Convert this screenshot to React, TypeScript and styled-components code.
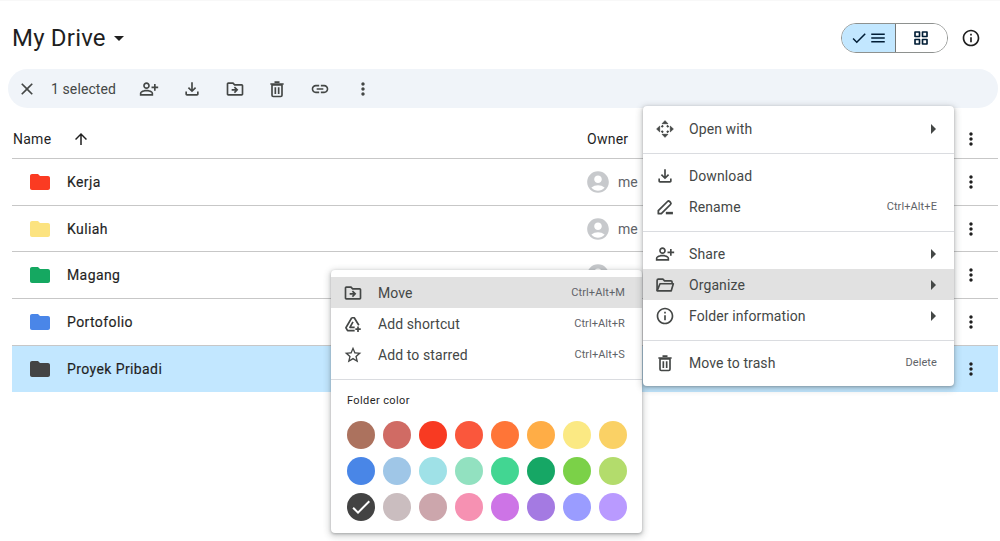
import React from 'react'
import styled, { createGlobalStyle } from 'styled-components'
import {
  MdAccountCircle,
  MdArrowDropDown,
  MdArrowRight,
  MdArrowUpward,
  MdCheck,
  MdClose,
  MdFolder,
  MdInfoOutline,
  MdLink,
  MdMenu,
  MdMoreVert,
  MdOutlineDriveFileMove,
  MdOutlineFileDownload,
  MdOutlinePersonAddAlt,
  MdStarBorder,
} from 'react-icons/md'

const GlobalStyle = createGlobalStyle`
  html, body {
    margin: 0;
    padding: 0;
    background: #fff;
  }
  body {
    font-family: Roboto, "Liberation Sans", sans-serif;
    color: #1f1f1f;
  }
`

const Page = styled.div`
  position: relative;
  width: 1000px;
  height: 541px;
  overflow: hidden;
  box-sizing: border-box;
  padding: 23px 2px 0 12px;
  box-shadow: inset 0 1px 0 #f8f8f8;
`

const Header = styled.div`
  display: flex;
  align-items: center;
  height: 30px;
`

const Title = styled.h1`
  margin: 0;
  font-size: 24px;
  line-height: 30px;
  font-weight: 400;
  letter-spacing: 0.2px;
  color: #1f1f1f;
`

const TitleCaret = styled.span`
  display: flex;
  margin-left: 1px;
  font-size: 24px;
`

const Spacer = styled.div`
  flex: 1;
`

const ViewToggle = styled.div`
  display: flex;
  width: 107px;
  height: 30px;
  box-sizing: border-box;
  border: 1px solid #8e918f;
  border-radius: 15px;
  overflow: hidden;
`

const ToggleHalf = styled.div<{ $active?: boolean }>`
  display: flex;
  align-items: center;
  justify-content: center;
  gap: 1px;
  width: ${(p) => (p.$active ? '54px' : '52px')};
  font-size: 18px;
  color: #001d35;
  background: ${(p) => (p.$active ? '#c2e7ff' : '#fff')};
  border-right: ${(p) => (p.$active ? '1px solid #747775' : 'none')};
`

const InfoButton = styled.div`
  display: flex;
  margin: 0 17px 0 13px;
  font-size: 20px;
  color: #1f1f1f;
`

const Toolbar = styled.div`
  display: flex;
  align-items: center;
  height: 39px;
  margin: 16px 0 0 -4px;
  padding-left: 9px;
  background: #f0f4f9;
  border-radius: 20px;
  color: #444746;
`

const ToolIcon = styled.span`
  display: flex;
  justify-content: center;
  width: 20px;
  margin-right: 22.8px;
  font-size: 20px;
`

const CloseIcon = styled(ToolIcon)`
  margin-right: 14px;
`

const SelectedCount = styled.span`
  width: 64px;
  margin-right: 24px;
  font-size: 14px;
  letter-spacing: 0.1px;
  white-space: nowrap;
`

const ColumnHead = styled.div`
  display: grid;
  grid-template-columns: 575px 1fr 54px;
  align-items: center;
  height: 51px;
  padding-top: 12px;
  border-bottom: 1px solid #c7c7c7;
  box-sizing: border-box;
  font-size: 14px;
  letter-spacing: 0.25px;
  color: #1f1f1f;
`

const NameHead = styled.div`
  display: flex;
  align-items: center;
  gap: 21px;
  padding-left: 1px;
  svg {
    font-size: 18px;
    color: #1f1f1f;
  }
`

const Row = styled.div<{ $selected?: boolean }>`
  display: grid;
  grid-template-columns: 575px 1fr 54px;
  align-items: center;
  height: 46.7px;
  box-sizing: border-box;
  border-bottom: 1px solid ${(p) => (p.$selected ? '#c2e7ff' : '#c7c7c7')};
  background: ${(p) => (p.$selected ? '#c2e7ff' : 'transparent')};
  font-size: 14px;
`

const NameCell = styled.div`
  display: flex;
  align-items: center;
  gap: 15px;
  padding-left: 16px;
  letter-spacing: 0.4px;
  color: #1f1f1f;
  -webkit-text-stroke: 0.15px currentColor;
`

const FolderGlyph = styled.span<{ $color: string }>`
  display: flex;
  font-size: 24px;
  color: ${(p) => p.$color};
`

const OwnerCell = styled.div`
  display: flex;
  align-items: center;
  gap: 7px;
  margin-left: -2px;
  color: #5f6368;
  svg {
    font-size: 26px;
    color: #c7c9cc;
  }
`

const Kebab = styled.span`
  display: flex;
  justify-content: center;
  font-size: 20px;
  color: #1f1f1f;
`

const Menu = styled.div<{ $left: number; $top: number }>`
  position: absolute;
  left: ${(p) => p.$left}px;
  top: ${(p) => p.$top}px;
  width: 311px;
  box-sizing: border-box;
  padding: 7px 0 8px;
  background: #fff;
  border-radius: 4px;
  box-shadow: 0 2px 6px 2px rgba(60, 64, 67, 0.2), 0 1px 3px rgba(60, 64, 67, 0.35);
  z-index: 2;
`

const MenuItem = styled.div<{ $active?: boolean }>`
  display: flex;
  align-items: center;
  height: 31px;
  padding: 0 17px 0 12px;
  font-size: 14px;
  letter-spacing: 0.1px;
  color: #444746;
  background: ${(p) => (p.$active ? '#e1e1e1' : 'transparent')};
`

const ItemIcon = styled.span`
  display: flex;
  justify-content: center;
  width: 20px;
  margin-right: 14px;
  font-size: 20px;
  color: #444746;
`

const ActionsMenu = styled(Menu)`
  ${ItemIcon} {
    margin-right: 15px;
  }
`

const ItemLabel = styled.span`
  flex: 1;
`

const Shortcut = styled.span`
  font-size: 11px;
  letter-spacing: 0.1px;
  color: #5f6368;
`

const Submenu = styled.span`
  display: flex;
  margin-right: -8px;
  font-size: 24px;
  color: #444746;
`

const Divider = styled.div`
  height: 1px;
  margin: 9px 0 6px;
  background: #dadce0;
`

const ColorHeading = styled.div`
  margin: 14px 0 0 16px;
  font-size: 11px;
  line-height: 13px;
  letter-spacing: 0.4px;
  color: #1f1f1f;
`

const Swatches = styled.div`
  display: grid;
  grid-template-columns: repeat(8, 28px);
  gap: 8px;
  margin: 14px 0 4px 16px;
`

const Swatch = styled.div<{ $color: string }>`
  display: flex;
  align-items: center;
  justify-content: center;
  width: 28px;
  height: 28px;
  border-radius: 50%;
  background: ${(p) => p.$color};
  color: #fff;
  font-size: 24px;
`

const Glyph = styled.svg.attrs({ viewBox: '0 0 24 24', width: '1em', height: '1em', strokeWidth: 2 })`
  fill: none;
  stroke: currentColor;
  stroke-linejoin: round;
`

const TrashIcon = () => (
  <Glyph>
    <path d="M6 7h12v12.5a1.5 1.5 0 0 1-1.5 1.5h-9A1.5 1.5 0 0 1 6 19.5z" />
    <path d="M4 6h16M9 3.8h6M10 10v8M14 10v8" />
  </Glyph>
)

const OpenWithIcon = () => (
  <Glyph>
    <path d="M12 2l3.4 3.6H8.600zM12 22l-3.400-3.600h6.800zM2 12l3.600-3.400v6.800zM22 12l-3.600 3.400V8.600z" fill="currentColor" strokeWidth="1" />
    <path d="M9.700 7.800L7.800 9.700M14.300 7.800l1.900 1.900M9.700 16.200L7.800 14.300M14.300 16.200l1.900-1.900" strokeWidth="2.400" />
  </Glyph>
)

const RenameIcon = () => (
  <Glyph>
    <path d="M4 20v-3.600L15 5.400a1.800 1.800 0 0 1 2.500 0l1.100 1.100a1.800 1.800 0 0 1 0 2.500L7.600 20z" strokeWidth="2.100" />
    <path d="M13 19.300h8.500" strokeWidth="3" />
  </Glyph>
)

const FolderOpenIcon = () => (
  <Glyph>
    <path d="M2.500 19V6.500C2.500 5.700 3.200 5 4 5h5.500l2 2H19c.8 0 1.500.7 1.500 1.500V10" />
    <path d="M2.500 19L6 10.500h16L19.500 19z" />
  </Glyph>
)

const AddShortcutIcon = () => (
  <Glyph>
    <path d="M10.500 4.500h3l5.500 9M10.500 4.500l-7 12 2 3.500H14" />
    <path d="M12 9.500L8.300 16H14" />
    <path d="M18 15v6.500M14.800 18.200h6.500" />
  </Glyph>
)

const GridIcon = () => (
  <Glyph>
    <path d="M4 4h6v6H4zM14 4h6v6h-6zM4 14h6v6H4zM14 14h6v6h-6z" strokeWidth="2.200" />
  </Glyph>
)

const folders = [
  { name: 'Kerja', color: '#fb3b22', avatar: true, me: true },
  { name: 'Kuliah', color: '#fce380', avatar: true, me: true },
  { name: 'Magang', color: '#15a861', avatar: true, me: false },
  { name: 'Portofolio', color: '#4a86e8', avatar: false, me: false },
  { name: 'Proyek Pribadi', color: '#444444', avatar: false, me: false, selected: true },
]

const swatchColors = [
  '#ac725e', '#d06b64', '#f83a22', '#fa573c', '#ff7537', '#ffad46', '#fbe983', '#fad165',
  '#4986e7', '#9fc6e7', '#9fe1e7', '#92e1c0', '#42d692', '#16a765', '#7bd148', '#b3dc6c',
  '#434343', '#cabdbf', '#cca6ac', '#f691b2', '#cd74e6', '#a47ae2', '#9a9cff', '#b99aff',
]

const App = () => {
  return (
    <Page>
      <GlobalStyle />
      <Header>
        <Title>My Drive</Title>
        <TitleCaret><MdArrowDropDown /></TitleCaret>
        <Spacer />
        <ViewToggle>
          <ToggleHalf $active><MdCheck /><MdMenu /></ToggleHalf>
          <ToggleHalf><GridIcon /></ToggleHalf>
        </ViewToggle>
        <InfoButton><MdInfoOutline /></InfoButton>
      </Header>

      <Toolbar>
        <CloseIcon><MdClose /></CloseIcon>
        <SelectedCount>1 selected</SelectedCount>
        <ToolIcon><MdOutlinePersonAddAlt /></ToolIcon>
        <ToolIcon><MdOutlineFileDownload /></ToolIcon>
        <ToolIcon><MdOutlineDriveFileMove /></ToolIcon>
        <ToolIcon><TrashIcon /></ToolIcon>
        <ToolIcon><MdLink /></ToolIcon>
        <ToolIcon><MdMoreVert /></ToolIcon>
      </Toolbar>

      <ColumnHead>
        <NameHead>Name <MdArrowUpward /></NameHead>
        <div>Owner</div>
        <Kebab><MdMoreVert /></Kebab>
      </ColumnHead>

      {folders.map((f) => (
        <Row key={f.name} $selected={f.selected}>
          <NameCell>
            <FolderGlyph $color={f.color}><MdFolder /></FolderGlyph>
            {f.name}
          </NameCell>
          <OwnerCell>
            {f.avatar && <MdAccountCircle />}
            {f.me && 'me'}
          </OwnerCell>
          <Kebab><MdMoreVert /></Kebab>
        </Row>
      ))}

      <ActionsMenu $left={331} $top={270}>
        <MenuItem $active>
          <ItemIcon><MdOutlineDriveFileMove /></ItemIcon>
          <ItemLabel>Move</ItemLabel>
          <Shortcut>Ctrl+Alt+M</Shortcut>
        </MenuItem>
        <MenuItem>
          <ItemIcon><AddShortcutIcon /></ItemIcon>
          <ItemLabel>Add shortcut</ItemLabel>
          <Shortcut>Ctrl+Alt+R</Shortcut>
        </MenuItem>
        <MenuItem>
          <ItemIcon><MdStarBorder /></ItemIcon>
          <ItemLabel>Add to starred</ItemLabel>
          <Shortcut>Ctrl+Alt+S</Shortcut>
        </MenuItem>
        <Divider />
        <ColorHeading>Folder color</ColorHeading>
        <Swatches>
          {swatchColors.map((c, i) => (
            <Swatch key={c} $color={c}>{i === 16 && <MdCheck />}</Swatch>
          ))}
        </Swatches>
      </ActionsMenu>

      <Menu $left={643} $top={106}>
        <MenuItem>
          <ItemIcon><OpenWithIcon /></ItemIcon>
          <ItemLabel>Open with</ItemLabel>
          <Submenu><MdArrowRight /></Submenu>
        </MenuItem>
        <Divider />
        <MenuItem>
          <ItemIcon><MdOutlineFileDownload /></ItemIcon>
          <ItemLabel>Download</ItemLabel>
        </MenuItem>
        <MenuItem>
          <ItemIcon><RenameIcon /></ItemIcon>
          <ItemLabel>Rename</ItemLabel>
          <Shortcut>Ctrl+Alt+E</Shortcut>
        </MenuItem>
        <Divider />
        <MenuItem>
          <ItemIcon><MdOutlinePersonAddAlt /></ItemIcon>
          <ItemLabel>Share</ItemLabel>
          <Submenu><MdArrowRight /></Submenu>
        </MenuItem>
        <MenuItem $active>
          <ItemIcon><FolderOpenIcon /></ItemIcon>
          <ItemLabel>Organize</ItemLabel>
          <Submenu><MdArrowRight /></Submenu>
        </MenuItem>
        <MenuItem>
          <ItemIcon><MdInfoOutline /></ItemIcon>
          <ItemLabel>Folder information</ItemLabel>
          <Submenu><MdArrowRight /></Submenu>
        </MenuItem>
        <Divider />
        <MenuItem>
          <ItemIcon><TrashIcon /></ItemIcon>
          <ItemLabel>Move to trash</ItemLabel>
          <Shortcut>Delete</Shortcut>
        </MenuItem>
      </Menu>
    </Page>
  )
}

export default App
